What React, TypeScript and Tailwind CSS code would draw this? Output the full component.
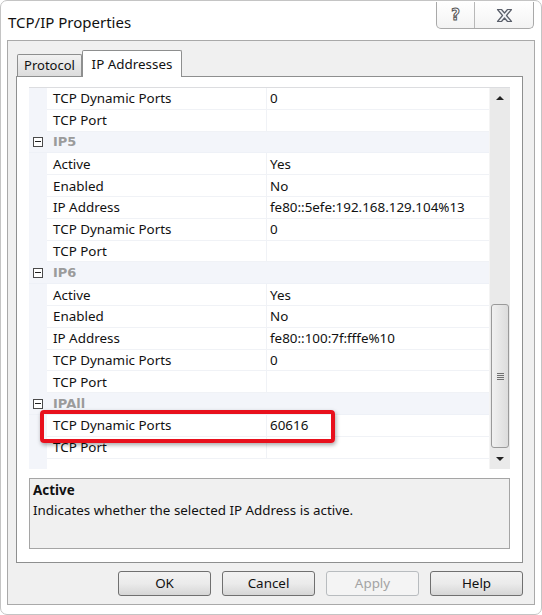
import React from 'react';

type Row =
  | { kind: 'group'; label: string }
  | { kind: 'prop'; name: string; value: string };

const rows: Row[] = [
  { kind: 'prop', name: 'TCP Dynamic Ports', value: '0' },
  { kind: 'prop', name: 'TCP Port', value: '' },
  { kind: 'group', label: 'IP5' },
  { kind: 'prop', name: 'Active', value: 'Yes' },
  { kind: 'prop', name: 'Enabled', value: 'No' },
  { kind: 'prop', name: 'IP Address', value: 'fe80::5efe:192.168.129.104%13' },
  { kind: 'prop', name: 'TCP Dynamic Ports', value: '0' },
  { kind: 'prop', name: 'TCP Port', value: '' },
  { kind: 'group', label: 'IP6' },
  { kind: 'prop', name: 'Active', value: 'Yes' },
  { kind: 'prop', name: 'Enabled', value: 'No' },
  { kind: 'prop', name: 'IP Address', value: 'fe80::100:7f:fffe%10' },
  { kind: 'prop', name: 'TCP Dynamic Ports', value: '0' },
  { kind: 'prop', name: 'TCP Port', value: '' },
  { kind: 'group', label: 'IPAll' },
  { kind: 'prop', name: 'TCP Dynamic Ports', value: '60616' },
  { kind: 'prop', name: 'TCP Port', value: '' },
];

const font = { fontFamily: '"Noto Sans", "Open Sans", sans-serif' };

const MinusBox = () => (
  <div className="w-[10px] h-[10px] border border-[#4a4a4a] bg-white flex items-center justify-center">
    <div className="w-[6px] h-px bg-[#222]" />
  </div>
);

const GridRow = ({ row }: { row: Row }) => {
  if (row.kind === 'group') {
    return (
      <div className="flex h-[21.8px] bg-[#f3f5fa] border-b border-[#eef1f7]">
        <div className="w-[18px] flex items-center justify-center">
          <MinusBox />
        </div>
        <div className="pl-[6px] flex items-center text-[13px] font-bold text-[#9b9b9b]" style={{ fontFamily: '"DejaVu Sans", sans-serif' }}>
          {row.label}
        </div>
      </div>
    );
  }
  return (
    <div className="flex h-[21.8px]">
      <div className="w-[18px] bg-[#f3f5fa]" />
      <div className="flex flex-1 border-b border-[#f0f2f6]">
        <div className="w-[220px] pl-[6px] flex items-center text-[13.4px] text-[#111] border-r border-[#f0f2f6]">
          {row.name}
        </div>
        <div className="flex-1 pl-[3px] flex items-center text-[13.4px] text-[#111]">{row.value}</div>
      </div>
    </div>
  );
};

const ScrollBar = () => (
  <div className="w-[21px] bg-[#eaeaea] border-l border-[#f4f4f4] flex flex-col items-center">
    <div className="h-[20px] flex items-center justify-center">
      <div className="w-0 h-0 border-l-[4px] border-r-[4px] border-b-[4px] border-l-transparent border-r-transparent border-b-[#222]" />
    </div>
    <div className="flex-1 w-full" />
    <div className="w-[18px] h-[144px] rounded-[3px] border border-[#9a9a9a] bg-gradient-to-r from-[#f1f1f1] to-[#dcdcdc] flex items-center justify-center">
      <div className="flex flex-col gap-[1px]">
        <div className="w-[7px] h-px bg-[#707070]" />
        <div className="w-[7px] h-px bg-[#707070]" />
        <div className="w-[7px] h-px bg-[#707070]" />
        <div className="w-[7px] h-px bg-[#707070]" />
      </div>
    </div>
    <div className="h-[21px] flex items-center justify-center">
      <div className="w-0 h-0 border-l-[4px] border-r-[4px] border-t-[4px] border-l-transparent border-r-transparent border-t-[#222]" />
    </div>
  </div>
);

const DialogButton = ({ label, disabled }: { label: string; disabled?: boolean }) => (
  <div
    className={`w-[93px] h-[25px] rounded-[3px] border flex items-center justify-center text-[13.4px] ${
      disabled
        ? 'border-[#b8bcbf] bg-[#f4f4f4] text-[#a3a3a3]'
        : 'border-[#707070] bg-gradient-to-b from-[#f2f2f2] via-[#ebebeb] to-[#d6d6d6] text-[#111]'
    }`}
  >
    {label}
  </div>
);

export default function App() {
  return (
    <div className="w-[542px] h-[615px] bg-white relative overflow-hidden" style={font}>
      <div className="absolute inset-0 rounded-[7px] border border-[#c4c4c4] pointer-events-none" />

      {/* caption */}
      <div className="h-[40px] flex items-start">
        <div className="pl-[8px] pt-[11px] text-[15px] text-[#111]">TCP/IP Properties</div>
        <div className="ml-auto mr-[8px] mt-[2px] flex h-[27px] rounded-b-[5px] border border-[#a9a9a9] border-t-0 bg-gradient-to-b from-white to-[#f3f3f3]">
          <div className="w-[38px] flex items-center justify-center border-r border-[#b8b8b8] text-[15px] font-bold text-white [-webkit-text-stroke:1px_#555]" style={{ fontFamily: '"DejaVu Sans", sans-serif' }}>
            ?
          </div>
          <div className="w-[58px] flex items-center justify-center">
            <svg width="17" height="15" viewBox="0 0 17 15">
              <path
                d="M1.5 1.5 H5.5 L8.5 5 L11.5 1.5 H15.5 L10.5 7.5 L15.5 13.5 H11.5 L8.5 10 L5.5 13.5 H1.5 L6.5 7.5 Z"
                fill="#eef0f4"
                stroke="#5a5f6a"
                strokeWidth="1.2"
                strokeLinejoin="round"
              />
            </svg>
          </div>
        </div>
      </div>

      {/* client area */}
      <div className="mx-[7px] h-[565px] border border-[#a9a9a9] bg-[#f0f0f0] flex flex-col pl-[8px] pr-[11px] pt-[9px]">
        {/* tabs */}
        <div className="flex items-end h-[26px] pl-[1px] relative z-10">
          <div className="w-[65px] h-[22px] border border-[#8e8f8f] border-b-0 bg-gradient-to-b from-[#f2f2f2] to-[#dcdcdc] flex items-center justify-center text-[13px] text-[#111] rounded-t-[2px]">
            Protocol
          </div>
          <div className="w-[100px] h-[27px] -mb-px border border-[#8e8f8f] border-b-0 bg-white flex items-start pt-[3px] justify-center text-[13.4px] text-[#111] rounded-t-[2px]">
            IP Addresses
          </div>
        </div>
        <div className="w-[507px] h-[487px] border border-[#8e8f8f] bg-white px-[12px] pt-[10px] flex flex-col">
          <div className="h-[382px] border-t border-[#dcdde0] flex">
            <div className="flex-1 flex flex-col">
              {rows.map((r, i) => (
                <GridRow key={i} row={r} />
              ))}
              <div className="flex flex-1">
                <div className="w-[18px] bg-[#f3f5fa]" />
                <div className="flex-1" />
              </div>
            </div>
            <ScrollBar />
          </div>
          <div className="mt-[9px] h-[71px] border border-[#a5a5a5] bg-[#f0f0f0] px-[3px] pt-[1px] text-[13.4px] text-[#111]">
            <div className="font-bold leading-[20px]">Active</div>
            <div className="leading-[21px]">Indicates whether the selected IP Address is active.</div>
          </div>
        </div>

        {/* buttons */}
        <div className="flex justify-end gap-[11px] mt-[8px]">
          <DialogButton label="OK" />
          <DialogButton label="Cancel" />
          <DialogButton label="Apply" disabled />
          <DialogButton label="Help" />
        </div>
      </div>

      {/* highlight around the dynamic port entry */}
      <div className="absolute left-[40px] top-[410px] w-[295px] h-[33px] rounded-[4px] border-[4px] border-[#e8101c] shadow-[1px_2px_4px_rgba(0,0,0,0.35)]" />
    </div>
  );
}
